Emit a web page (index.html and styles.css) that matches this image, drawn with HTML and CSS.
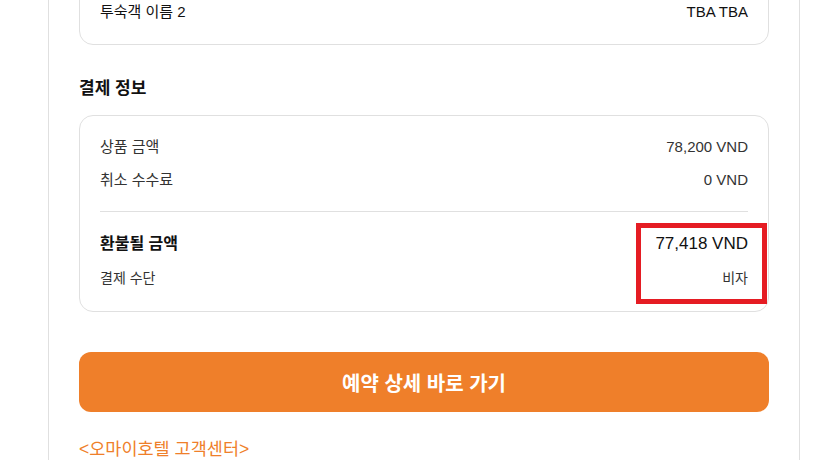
FILE: index.html
```html
<!DOCTYPE html>
<html lang="ko">
<head>
    <meta charset="UTF-8">
    <meta name="viewport" content="width=device-width, initial-scale=1.0">
    <title>환불 안내</title>
    <link rel="stylesheet" href="styles.css">
</head>
<body>
    <div class="page">
        <div class="card guest-card">
            <div class="row strong-row">
                <span>투숙객 이름 2</span>
                <span>TBA TBA</span>
            </div>
        </div>

        <h2 class="section-title">결제 정보</h2>
        <div class="card pay-card">
            <div class="row">
                <span>상품 금액</span>
                <span>78,200 VND</span>
            </div>
            <div class="row">
                <span>취소 수수료</span>
                <span>0 VND</span>
            </div>
            <hr class="divider">
            <div class="row total-row">
                <span class="total-label">환불될 금액</span>
                <span>77,418 VND</span>
            </div>
            <div class="row method-row">
                <span>결제 수단</span>
                <span>비자</span>
            </div>
            <div class="highlight"></div>
        </div>

        <button class="detail-btn">예약 상세 바로 가기</button>
        <a class="help-link" href="#">&lt;오마이호텔 고객센터&gt;</a>
    </div>
</body>
</html>
```

FILE: styles.css
```css
body {
    margin: 0;
    background: #fff;
    font-family: "Liberation Sans", Arial, "Noto Sans CJK KR", sans-serif;
    color: #333;
    overflow: hidden;
}
.page {
    width: 690px;
    margin: -21px 0 0 48px;
    padding: 0 30px 40px;
    border-left: 1px solid #e0e0e0;
    border-right: 1px solid #e0e0e0;
    display: flex;
    flex-direction: column;
}
.card {
    border: 1px solid #e0e0e0;
    border-radius: 14px;
    padding: 20px;
    position: relative;
}
.row {
    display: flex;
    justify-content: space-between;
    align-items: center;
    font-size: 15px;
    line-height: 22px;
}
.strong-row {
    color: #111;
    line-height: 24px;
}
.section-title {
    margin: 32px 0 14px;
    font-size: 17px;
    line-height: 24px;
    font-weight: bold;
    color: #111;
}
.pay-card {
    padding-bottom: 22px;
}
.pay-card .row + .row {
    margin-top: 11px;
}
.divider {
    border: none;
    border-top: 1px solid #e0e0e0;
    margin: 20px 0 20px;
}
.pay-card .total-row {
    margin-top: 0;
    font-size: 17px;
    line-height: 24px;
    color: #111;
}
.total-label {
    font-weight: bold;
    font-size: 16px;
}
.pay-card .method-row {
    margin-top: 10px;
    font-size: 14px;
}
/* red annotation box over the amount */
.highlight {
    position: absolute;
    top: 107px;
    right: 1px;
    width: 131px;
    height: 81px;
    box-sizing: border-box;
    border: 5px solid #e51c23;
}
.detail-btn {
    margin-top: 40px;
    height: 60px;
    border: none;
    border-radius: 12px;
    background: #ef7f2a;
    color: #fff;
    font-family: inherit;
    font-size: 20px;
    font-weight: bold;
    cursor: pointer;
}
.help-link {
    margin-top: 27px;
    align-self: flex-start;
    color: #ef7f2a;
    font-size: 17.5px;
    line-height: 20px;
    text-decoration: none;
}
```
